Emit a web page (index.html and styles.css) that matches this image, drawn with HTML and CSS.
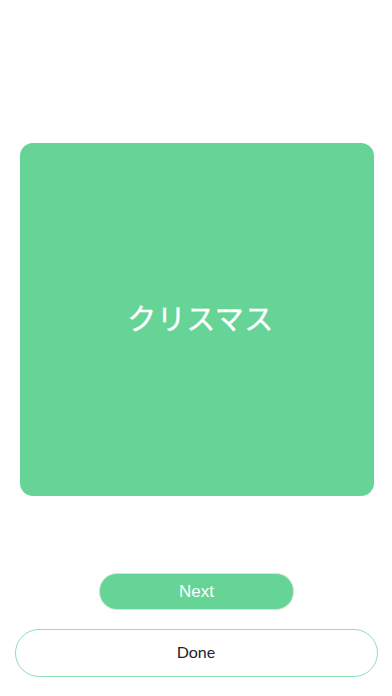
FILE: index.html
```html
<!DOCTYPE html>
<html lang="ja">
<head>
    <meta charset="UTF-8">
    <meta name="viewport" content="width=device-width, initial-scale=1.0">
    <title>Flashcard</title>
    <link rel="stylesheet" href="styles.css">
</head>
<body>
    <div class="screen">
        <div class="card">
            <p class="word">クリスマス</p>
        </div>
        <button class="next">Next</button>
        <button class="done">Done</button>
    </div>
</body>
</html>
```

FILE: styles.css
```css
body {
    margin: 0;
    background: #ffffff;
    font-family: "Liberation Sans", "Noto Sans CJK JP", sans-serif;
}
.screen {
    display: flex;
    flex-direction: column;
    align-items: center;
    padding-top: 143px;
}
.card {
    box-sizing: border-box;
    width: 354px;
    height: 353px;
    margin-left: 1px;
    padding-left: 8px;
    background: #66d496;
    border-radius: 13px;
    display: flex;
    align-items: center;
    justify-content: center;
}
.word {
    margin: 0 0 6px 0;
    color: #ffffff;
    font-family: "Noto Sans CJK JP", sans-serif;
    font-weight: 400;
    font-size: 29px;
    letter-spacing: 0.5px;
    -webkit-text-stroke: 0.4px #ffffff;
}
button {
    cursor: pointer;
    box-sizing: border-box;
    padding: 0;
}
.next {
    margin-top: 77px;
    width: 195px;
    height: 37px;
    margin-left: 1px;
    background: #66d496;
    color: #ffffff;
    border: 1px solid #cfe8d9;
    border-radius: 18px;
    font-family: "Liberation Sans", sans-serif;
    font-size: 17px;
}
.done {
    margin-top: 19px;
    width: 363px;
    height: 48px;
    padding-bottom: 3px;
    background: #ffffff;
    color: #222222;
    border: 1px solid #8fe0b2;
    border-radius: 24px;
    font-family: Lato, sans-serif;
    font-size: 16px;
}
```
